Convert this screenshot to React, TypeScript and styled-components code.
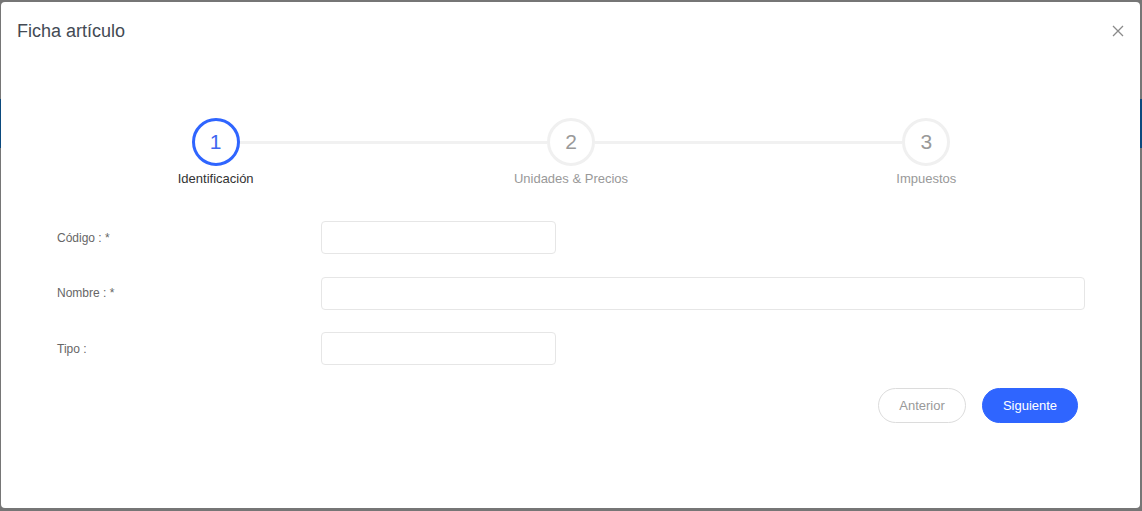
import React from "react";
import styled, { createGlobalStyle } from "styled-components";

const Global = createGlobalStyle`
  html, body { margin: 0; padding: 0; }
  body { font-family: "Liberation Sans", Arial, sans-serif; }
  * { box-sizing: border-box; }
`;

const Backdrop = styled.div`
  position: relative;
  width: 1142px;
  height: 511px;
  background: #767676;
  padding: 2px 2px 0 1px;
  overflow: hidden;
`;

const PageBand = styled.div`
  position: absolute;
  left: 0;
  right: 0;
  top: 99px;
  height: 49px;
  background: #0b4a7e;
`;

const Modal = styled.div`
  position: relative;
  width: 1139px;
  height: 506px;
  background: #fff;
  border-radius: 4px;
`;

const Header = styled.div`
  display: flex;
  align-items: center;
  justify-content: space-between;
  padding: 17px 14px 0 16px;
  height: 41px;
`;

const Title = styled.h1`
  margin: 0;
  font-size: 18px;
  line-height: 24px;
  font-weight: 400;
  color: #434a54;
`;

const CloseButton = styled.button`
  display: flex;
  align-items: center;
  justify-content: center;
  width: 16px;
  height: 16px;
  padding: 0;
  border: 0;
  background: transparent;
  cursor: pointer;
`;

const Stepper = styled.div`
  display: grid;
  grid-template-columns: repeat(3, 1fr);
  margin: 75px 36px 0 37px;
`;

const Step = styled.div<{ $last?: boolean }>`
  position: relative;
  display: flex;
  flex-direction: column;
  align-items: center;
  &::after {
    content: "";
    display: ${(p) => (p.$last ? "none" : "block")};
    position: absolute;
    top: 22.5px;
    left: calc(50% + 24px);
    width: calc(100% - 48px);
    height: 3px;
    background: #f1f1f1;
  }
`;

const Circle = styled.div<{ $active?: boolean }>`
  width: 48px;
  height: 48px;
  border-radius: 50%;
  border: 3px solid ${(p) => (p.$active ? "#2f65ff" : "#f0f0f0")};
  display: flex;
  align-items: center;
  justify-content: center;
  font-size: 21px;
  color: ${(p) => (p.$active ? "#3f66f0" : "#999")};
`;

const StepLabel = styled.div<{ $active?: boolean }>`
  margin-top: 5px;
  font-size: 13px;
  line-height: 16px;
  color: ${(p) => (p.$active ? "#333" : "#999")};
`;

const Form = styled.div`
  display: flex;
  flex-direction: column;
  gap: 22.5px;
  margin-top: 34px;
  padding: 0 55px 0 56px;
`;

const Row = styled.div`
  display: flex;
  align-items: center;
`;

const Label = styled.label`
  width: 264px;
  flex: none;
  font-size: 12px;
  color: #666;
`;

const Input = styled.input<{ $full?: boolean }>`
  width: ${(p) => (p.$full ? "100%" : "235px")};
  flex: ${(p) => (p.$full ? "1" : "none")};
  height: 33px;
  border: 1px solid #e6e6e6;
  border-radius: 4px;
  padding: 0 10px;
  font-family: inherit;
  font-size: 13px;
  outline: none;
`;

const Actions = styled.div`
  display: flex;
  justify-content: flex-end;
  gap: 16px;
  margin-top: 23px;
  padding-right: 62px;
`;

const Button = styled.button<{ $primary?: boolean }>`
  height: 35px;
  width: ${(p) => (p.$primary ? "96px" : "88px")};
  border-radius: 18px;
  border: 1px solid ${(p) => (p.$primary ? "#2f65ff" : "#dcdcdc")};
  background: ${(p) => (p.$primary ? "#2f65ff" : "#fff")};
  color: ${(p) => (p.$primary ? "#fff" : "#999")};
  font-family: inherit;
  font-size: 13px;
  cursor: pointer;
`;

const steps = ["Identificación", "Unidades & Precios", "Impuestos"];

export default function App() {
  return (
    <>
      <Global />
      <Backdrop>
        <PageBand />
        <Modal>
          <Header>
            <Title>Ficha artículo</Title>
            <CloseButton aria-label="Cerrar">
              <svg width="12" height="12" viewBox="0 0 12 12">
                <path d="M1 1 L11 11 M11 1 L1 11" stroke="#8a8a8a" strokeWidth="1.3" fill="none" />
              </svg>
            </CloseButton>
          </Header>
          <Stepper>
            {steps.map((s, i) => (
              <Step key={s} $last={i === steps.length - 1}>
                <Circle $active={i === 0}>{i + 1}</Circle>
                <StepLabel $active={i === 0}>{s}</StepLabel>
              </Step>
            ))}
          </Stepper>
          <Form>
            <Row>
              <Label>Código : *</Label>
              <Input />
            </Row>
            <Row>
              <Label>Nombre : *</Label>
              <Input $full />
            </Row>
            <Row>
              <Label>Tipo :</Label>
              <Input />
            </Row>
          </Form>
          <Actions>
            <Button>Anterior</Button>
            <Button $primary>Siguiente</Button>
          </Actions>
        </Modal>
      </Backdrop>
    </>
  );
}
